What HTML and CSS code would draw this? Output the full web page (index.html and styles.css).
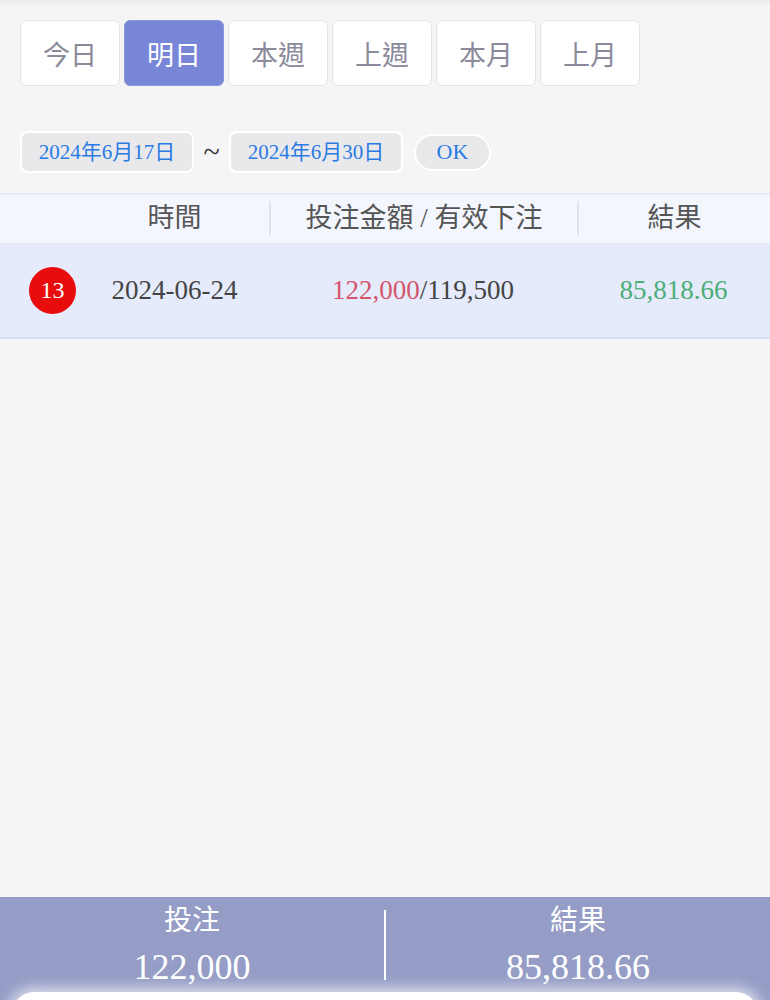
FILE: index.html
```html
<!DOCTYPE html>
<html>
<head>
    <meta charset="utf-8">
    <link rel="stylesheet" href="styles.css">
</head>
<body>
    <div class="page">
        <div class="content">
            <div class="tabs">
                <button class="tab">今日</button>
                <button class="tab active">明日</button>
                <button class="tab">本週</button>
                <button class="tab">上週</button>
                <button class="tab">本月</button>
                <button class="tab">上月</button>
            </div>

            <div class="dates">
                <span class="date-pill">2024年6月17日</span>
                <span class="tilde">~</span>
                <span class="date-pill">2024年6月30日</span>
                <button class="ok">OK</button>
            </div>

            <div class="table">
                <div class="thead">
                    <div></div>
                    <div class="th">時間</div>
                    <div class="th sep">投注金額 / 有效下注</div>
                    <div class="th sep">結果</div>
                </div>
                <div class="trow">
                    <div class="badge-cell"><span class="badge">13</span></div>
                    <div class="td">2024-06-24</div>
                    <div class="td"><span class="red">122,000</span>/119,500</div>
                    <div class="td green">85,818.66</div>
                </div>
            </div>
        </div>

        <div class="footer">
            <div class="summary">
                <div class="sum-col">
                    <div class="sum-label">投注</div>
                    <div class="sum-value">122,000</div>
                </div>
                <div class="sum-line"></div>
                <div class="sum-col">
                    <div class="sum-label">結果</div>
                    <div class="sum-value">85,818.66</div>
                </div>
            </div>
            <div class="card"></div>
        </div>
    </div>
</body>
</html>
```

FILE: styles.css
```css
body {
    margin: 0;
    font-family: "Liberation Serif", "Noto Sans CJK TC", serif;
    background-color: #f5f5f6;
}
.page {
    height: 100vh;
    display: flex;
    flex-direction: column;
    overflow: hidden;
    box-shadow: inset 0 7px 6px -6px rgba(0, 0, 0, 0.08);
}
.content {
    flex: 1;
}
.tabs {
    display: flex;
    gap: 4px;
    padding: 20px 20px 0;
}
.tab {
    width: 100px;
    height: 66px;
    background-color: #fff;
    border: 1px solid #e3e3f0;
    border-radius: 6px;
    font-family: "Noto Sans CJK TC", sans-serif;
    font-size: 27px;
    color: #8a8a9a;
    padding: 0;
}
.tab.active {
    background-color: #7886d7;
    border-color: #8c98de;
    color: #fff;
}
.dates {
    display: flex;
    align-items: center;
    padding: 45px 20px 0;
}
.date-pill {
    box-sizing: border-box;
    width: 174px;
    height: 42px;
    line-height: 38px;
    text-align: center;
    background-color: #e9e9ec;
    border: 2px solid #fff;
    border-radius: 8px;
    color: #2a7be4;
    font-size: 21px;
}
.tilde {
    font-size: 30px;
    line-height: 30px;
    color: #333;
    width: 35px;
    text-align: center;
}
.ok {
    margin-left: 11px;
    width: 77px;
    height: 37px;
    background-color: #e9e9ec;
    border: 2px solid #fff;
    border-radius: 20px;
    color: #2a7be4;
    font-family: "Liberation Serif", serif;
    font-size: 22px;
    padding: 0;
}
.table {
    margin-top: 20px;
}
.thead, .trow {
    display: grid;
    grid-template-columns: 80px 189px 308px 193px;
    align-items: center;
}
.thead {
    height: 48px;
    background-color: #f3f6fd;
    border-top: 2px solid #e3e8f6;
}
.th {
    font-family: "Liberation Serif", "Noto Sans CJK TC", sans-serif;
    font-size: 27px;
    color: #555;
    text-align: center;
    line-height: 34px;
    margin-top: -2px;
}
.th.sep {
    border-left: 2px solid #dfe3ee;
}
.trow {
    height: 93px;
    background-color: #e5ebfb;
    border-top: 1px solid #e0e6f4;
    border-bottom: 2px solid #d7def0;
}
.badge-cell {
    display: flex;
    justify-content: flex-end;
    padding-right: 4px;
}
.badge {
    width: 47px;
    height: 47px;
    border-radius: 50%;
    background-color: #e80c0c;
    color: #fff;
    font-size: 24px;
    display: flex;
    align-items: center;
    justify-content: center;
}
.td {
    text-align: center;
    font-size: 27px;
    color: #444;
}
.red {
    color: #d4566b;
}
.green {
    color: #4cae77;
}
.footer {
    height: 103px;
    flex-shrink: 0;
    background-color: #959dc6;
}
.summary {
    display: flex;
    align-items: center;
    height: 95px;
}
.sum-col {
    flex: 1;
    text-align: center;
    color: #fff;
}
.sum-label {
    font-family: "Noto Sans CJK TC", sans-serif;
    font-size: 28px;
    line-height: 40px;
    margin-top: -6px;
}
.sum-value {
    font-size: 36px;
    line-height: 48px;
    margin-top: 5px;
    margin-bottom: -5px;
}
.sum-line {
    width: 2px;
    height: 70px;
    background-color: #fff;
}
.card {
    margin: 0 12px;
    height: 80px;
    background-color: #fff;
    border-radius: 22px;
    box-shadow: 0 0 14px 4px rgba(255, 255, 255, 0.7);
}
```
